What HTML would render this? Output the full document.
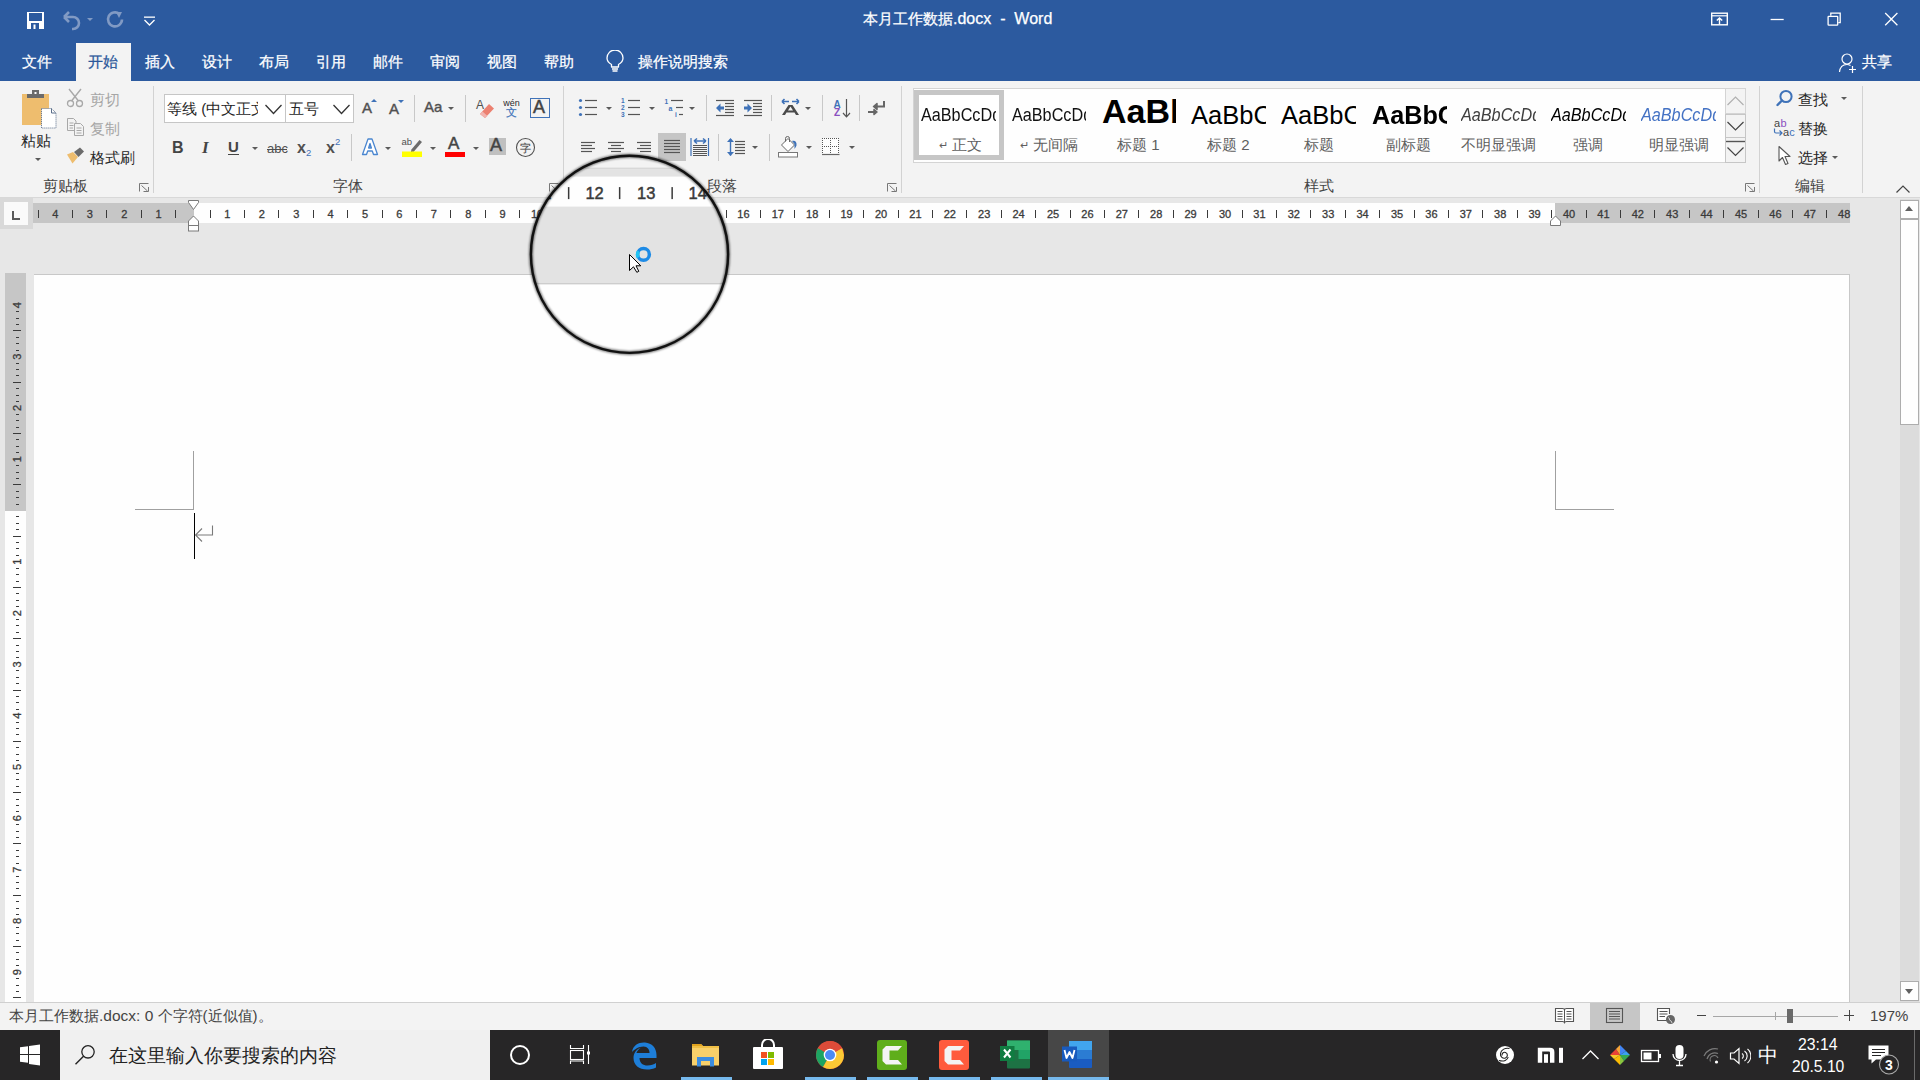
<!DOCTYPE html>
<html><head><meta charset="utf-8">
<style>
*{box-sizing:border-box;margin:0;padding:0}
html,body{width:1920px;height:1080px;overflow:hidden;background:#e7e7e7;font-family:"Liberation Sans",sans-serif}
.a{position:absolute}
#title{left:0;top:0;width:1920px;height:81px;background:#2c5a9f}
#ribbon{left:0;top:81px;width:1920px;height:117px;background:#f3f3f3;border-bottom:1px solid #d8d8d8}
#docbg{left:0;top:198px;width:1920px;height:805px;background:#e7e7e7}
#page{left:34px;top:274px;width:1816px;height:728px;background:#fefefe;border-top:1px solid #c8c8c8;border-right:1px solid #c8c8c8}
#status{left:0;top:1002px;width:1920px;height:28px;background:#f3f3f3;border-top:1px solid #d0d0d0}
#taskbar{left:0;top:1030px;width:1920px;height:50px;background:#272627}
.t{color:#fff;font-size:15px;white-space:nowrap;-webkit-text-stroke:0.25px currentColor}
</style></head><body>
<div id="title" class="a"></div>
<div id="ribbon" class="a"></div>
<!--TITLE-->
<!-- QAT -->
<svg class="a" style="left:26px;top:11px" width="19" height="19" viewBox="0 0 19 19">
<rect x="1" y="1" width="17" height="17" fill="#fff"/>
<rect x="3" y="2" width="13" height="8" fill="#2c5a9f"/>
<rect x="5" y="12" width="8" height="6" fill="#2c5a9f"/>
<rect x="7.5" y="13.5" width="2" height="4.5" fill="#fff"/>
</svg>
<svg class="a" style="left:60px;top:10px" width="36" height="22" viewBox="0 0 36 22">
<path d="M4 7 L9 2 M4 7 L9 12 M4 7 H13 A6 6 0 0 1 13 19 H12" fill="none" stroke="#819ac4" stroke-width="2.6" stroke-linejoin="round"/>
<path d="M27 8 L33 8 L30 11 Z" fill="#819ac4"/>
</svg>
<svg class="a" style="left:105px;top:10px" width="20" height="20" viewBox="0 0 20 20">
<path d="M14.5 4 A7 7 0 1 0 17 9.5" fill="none" stroke="#819ac4" stroke-width="2.6"/>
<path d="M11 2 L17 2 L14 8 Z" fill="#819ac4"/>
</svg>
<svg class="a" style="left:143px;top:15px" width="14" height="12" viewBox="0 0 14 12">
<rect x="1" y="1.5" width="11" height="1.3" fill="#fff"/>
<path d="M1.5 5 L6.5 10 L11.5 5" fill="none" stroke="#fff" stroke-width="1.3"/>
</svg>
<div class="a t" style="left:863px;top:10px;font-size:15px">本月工作数据<span style="font-size:16px">.docx&nbsp; -&nbsp; Word</span></div>
<!-- window buttons -->
<svg class="a" style="left:1700px;top:0px" width="210" height="40" viewBox="1700 0 210 40">
<rect x="1711.7" y="13.2" width="15.6" height="11.6" fill="none" stroke="#fff" stroke-width="1.4"/>
<path d="M1712 15.8 H1727" stroke="#fff" stroke-width="1.2"/>
<path d="M1719.5 24.5 V18 M1716.8 20.6 L1719.5 17.9 L1722.2 20.6" fill="none" stroke="#fff" stroke-width="1.4"/>
<path d="M1770.6 19.5 H1783.7" stroke="#fff" stroke-width="1.3"/>
<rect x="1828.1" y="16.3" width="9.6" height="8.9" rx="0.6" fill="none" stroke="#fff" stroke-width="1.3"/>
<path d="M1830.8 15.8 V13.2 H1840.2 V22.6 H1838.3" fill="none" stroke="#fff" stroke-width="1.3"/>
<path d="M1885.2 13 L1897.4 25.2 M1897.4 13 L1885.2 25.2" stroke="#fff" stroke-width="1.3"/>
</svg>
<!-- tabs -->
<div class="a" style="left:76px;top:43px;width:55px;height:38px;background:#f3f3f3"></div>
<div class="a t" style="left:22px;top:53px">文件</div>
<div class="a t" style="left:88px;top:53px;color:#2b579a">开始</div>
<div class="a t" style="left:145px;top:53px">插入</div>
<div class="a t" style="left:202px;top:53px">设计</div>
<div class="a t" style="left:259px;top:53px">布局</div>
<div class="a t" style="left:316px;top:53px">引用</div>
<div class="a t" style="left:373px;top:53px">邮件</div>
<div class="a t" style="left:430px;top:53px">审阅</div>
<div class="a t" style="left:487px;top:53px">视图</div>
<div class="a t" style="left:544px;top:53px">帮助</div>
<svg class="a" style="left:604px;top:50px" width="22" height="24" viewBox="0 0 22 24">
<path d="M7.5 17 V14.5 C4 12.5 3 10 3 8 A8 8 0 0 1 19 8 C19 10 18 12.5 14.5 14.5 V17 Z" fill="none" stroke="#fff" stroke-width="1.3" stroke-linejoin="round"/>
<path d="M8 19 H14 M8.5 21 H13.5" stroke="#fff" stroke-width="1.3"/>
</svg>
<div class="a t" style="left:638px;top:53px">操作说明搜索</div>
<svg class="a" style="left:1838px;top:52px" width="20" height="22" viewBox="0 0 20 22">
<circle cx="9" cy="7" r="5" fill="none" stroke="#fff" stroke-width="1.2"/>
<path d="M1.5 20 C2 15 5 12.5 9 12.5 C10.5 12.5 11.5 13 12.5 13.5" fill="none" stroke="#fff" stroke-width="1.2"/>
<path d="M14.5 14 V21 M11 17.5 H18" stroke="#fff" stroke-width="1.2"/>
</svg>
<div class="a t" style="left:1862px;top:53px">共享</div>
<!--/TITLE-->
<!--RIBBON-->
<style>
.r{position:absolute;font-size:15px;color:#262626;white-space:nowrap}
.lbl{position:absolute;font-size:15px;color:#444;white-space:nowrap;top:177px}
.sep{position:absolute;width:1px;background:#c8c8c8}
.gsep{position:absolute;width:1px;top:86px;height:107px;background:#d2d2d2}
.dd{position:absolute;width:0;height:0;border-left:3px solid transparent;border-right:3px solid transparent;border-top:3px solid #5a5a5a}
.launch{position:absolute;width:10px;height:9px}
</style>
<!-- clipboard group -->
<svg class="a" style="left:20px;top:88px" width="40" height="42" viewBox="0 0 40 42">
<rect x="2" y="6" width="27" height="31" fill="#eebd6e"/>
<rect x="7" y="6" width="17" height="4" fill="#6b6b6b"/>
<rect x="12" y="2" width="7" height="6" fill="#6b6b6b"/>
<rect x="14.5" y="4" width="2" height="2" fill="#fff"/>
<path d="M21.5 20.5 H31.5 L36 25 V40 H21.5 Z" fill="#fff" stroke="#5a6e8a" stroke-width="1" stroke-dasharray="1 1"/>
<path d="M31.5 20.5 V25 H36" fill="none" stroke="#5a6e8a" stroke-width="1"/>
</svg>
<div class="r" style="left:21px;top:132px">粘贴</div>
<div class="dd" style="left:35px;top:158px"></div>
<svg class="a" style="left:66px;top:88px" width="19" height="20" viewBox="0 0 19 20">
<path d="M3 1 L12.5 13 M15 1 L5.5 13" stroke="#a8a8a8" stroke-width="1.4"/>
<circle cx="4.5" cy="15.5" r="3" fill="none" stroke="#a8a8a8" stroke-width="1.3"/>
<circle cx="13.5" cy="15.5" r="3" fill="none" stroke="#a8a8a8" stroke-width="1.3"/>
</svg>
<div class="r" style="left:90px;top:91px;color:#a6a6a6">剪切</div>
<svg class="a" style="left:66px;top:117px" width="20" height="20" viewBox="0 0 20 20">
<path d="M1.5 1.5 H7.5 L10 4 V13.5 H1.5 Z" fill="#f3f3f3" stroke="#a8a8a8" stroke-width="1"/>
<path d="M3.5 6 H7.5 M3.5 8.5 H7.5 M3.5 11 H7" stroke="#a8a8a8" stroke-width="1"/>
<path d="M8.5 6.5 H14.5 L17.5 9.5 V18.5 H8.5 Z" fill="#f3f3f3" stroke="#a8a8a8" stroke-width="1"/>
<path d="M10.5 11 H15.5 M10.5 13.5 H15.5 M10.5 16 H15.5" stroke="#a8a8a8" stroke-width="1"/>
</svg>
<div class="r" style="left:90px;top:120px;color:#a6a6a6">复制</div>
<svg class="a" style="left:66px;top:147px" width="20" height="18" viewBox="0 0 20 18">
<path d="M1 7.5 L7 5 L12 10 L6.5 16.5 Z" fill="#eebd6e"/>
<path d="M8 5 L14 0.5 L18 4.5 L12.5 10 Z" fill="#6b6b6b"/>
</svg>
<div class="r" style="left:90px;top:149px">格式刷</div>
<div class="lbl" style="left:43px">剪贴板</div>
<svg class="launch" style="left:139px;top:183px" viewBox="0 0 10 9"><path d="M0.5 8.5 V0.5 H9.5 M2.5 2.5 L8.5 8 M4.5 8.5 H9.5 V4" fill="none" stroke="#777" stroke-width="1"/></svg>
<div class="gsep" style="left:153px"></div>

<!-- font group -->
<div class="a" style="left:164px;top:94px;width:190px;height:29px;background:#fff;border:1px solid #c6c6c6"></div>
<div class="a" style="left:285px;top:94px;width:1px;height:29px;background:#c6c6c6"></div>
<div class="r" style="left:167px;top:100px;width:91px;overflow:hidden">等线 (中文正文)</div>
<svg class="a" style="left:264px;top:103px" width="19" height="12" viewBox="0 0 19 12"><path d="M1.5 2 L9.5 10.5 L17.5 2" fill="none" stroke="#333" stroke-width="1.3"/></svg>
<div class="r" style="left:289px;top:100px">五号</div>
<svg class="a" style="left:332px;top:103px" width="19" height="12" viewBox="0 0 19 12"><path d="M1.5 2 L9.5 10.5 L17.5 2" fill="none" stroke="#333" stroke-width="1.3"/></svg>
<!-- grow / shrink -->
<div class="r" style="left:362px;top:99px;font-size:15px;color:#505050;-webkit-text-stroke:0.4px #505050">A</div>
<div class="a" style="left:371px;top:99px;width:0;height:0;border-left:3px solid transparent;border-right:3px solid transparent;border-bottom:3px solid #3f72b8"></div>
<div class="r" style="left:389px;top:100px;font-size:15px;color:#505050;-webkit-text-stroke:0.4px #505050">A</div>
<div class="a" style="left:398px;top:100px;width:0;height:0;border-left:3px solid transparent;border-right:3px solid transparent;border-top:3px solid #3f72b8"></div>
<div class="sep" style="left:414px;top:95px;height:27px"></div>
<div class="r" style="left:424px;top:98px;font-size:15px;color:#505050;-webkit-text-stroke:0.4px #505050">Aa</div>
<div class="dd" style="left:448px;top:107px"></div>
<div class="sep" style="left:465px;top:95px;height:27px"></div>
<!-- clear formatting -->
<svg class="a" style="left:475px;top:97px" width="22" height="23" viewBox="0 0 22 23">
<text x="1" y="12" font-family="Liberation Sans" font-size="12" fill="#505050">A</text>
<path d="M5 17 L14 7 L19 11.5 L10 21 Z" fill="#ec8070"/>
<path d="M5 17 L7.5 14.5 L12.5 19 L10 21 Z" fill="#f2b3ae"/>
</svg>
<!-- phonetic guide -->
<svg class="a" style="left:502px;top:97px" width="20" height="23" viewBox="0 0 20 23">
<text x="1.3" y="9" font-family="Liberation Sans" font-size="9" fill="#2a2a2a">wén</text>
</svg>
<div class="r" style="left:506px;top:105px;font-size:11px;color:#3f72b8;-webkit-text-stroke:0.2px #3f72b8">文</div>
<!-- char border -->
<div class="a" style="left:530px;top:98px;width:20px;height:20px;border:1.5px solid #3f72b8"></div>
<div class="r" style="left:533px;top:97px;font-size:18px;color:#444;-webkit-text-stroke:0.5px #444">A</div>
<div class="sep" style="left:554px;top:95px;height:27px;display:none"></div>
<!-- row 2 -->
<div class="r" style="left:172px;top:139px;font-size:16px;font-weight:bold;color:#444">B</div>
<div class="r" style="left:202px;top:138px;font-size:17px;font-style:italic;font-weight:bold;color:#444;font-family:'Liberation Serif',serif">I</div>
<div class="r" style="left:228px;top:138px;font-size:15px;font-weight:bold;color:#444">U</div>
<div class="a" style="left:228px;top:154px;width:11px;height:1px;background:#444"></div>
<div class="dd" style="left:252px;top:147px"></div>
<div class="r" style="left:267px;top:141px;font-size:13px;color:#505050">abc</div>
<div class="a" style="left:267px;top:149px;width:20px;height:1px;background:#505050"></div>
<div class="r" style="left:297px;top:139px;font-size:16px;font-weight:bold;color:#505050">x</div>
<div class="r" style="left:306px;top:147px;font-size:9.5px;color:#3f72b8">2</div>
<div class="r" style="left:326px;top:139px;font-size:16px;font-weight:bold;color:#505050">x</div>
<div class="r" style="left:335px;top:136px;font-size:9.5px;color:#3f72b8">2</div>
<div class="sep" style="left:351px;top:134px;height:27px"></div>
<svg class="a" style="left:361px;top:137px" width="18" height="20" viewBox="0 0 18 20">
<path d="M1.5 17.5 L7 2 H11 L16.5 17.5 H12.5 L11.3 14 H6.7 L5.5 17.5 Z M7.6 11 H10.4 L9 6.5 Z" fill="#fff" stroke="#4a86d0" stroke-width="1.3" stroke-linejoin="round"/>
<path d="M7.8 10.5 L9 7 L10.2 10.5 Z" fill="#4a86d0"/>
</svg>
<div class="dd" style="left:385px;top:147px"></div>
<svg class="a" style="left:401px;top:136px" width="24" height="22" viewBox="0 0 24 22">
<text x="0.5" y="8.5" font-family="Liberation Sans" font-size="9.5" fill="#505050">ab</text>
<path d="M10 14 L18.5 4 L21 6 L12.5 16 Z" fill="#6b6b6b"/>
<path d="M10 14 L12.5 16 L10 16.5 Z" fill="#6b6b6b"/>
<rect x="1" y="15.5" width="20" height="5.5" fill="#ffff00"/>
</svg>
<div class="dd" style="left:430px;top:147px"></div>
<div class="r" style="left:448px;top:134px;font-size:17px;color:#444;-webkit-text-stroke:0.5px #444">A</div>
<div class="a" style="left:445px;top:152px;width:20px;height:5px;background:#f00"></div>
<div class="dd" style="left:473px;top:147px"></div>
<div class="a" style="left:489px;top:138px;width:17px;height:17px;background:#c0c0c0"></div>
<div class="r" style="left:490px;top:135px;font-size:18px;color:#444;-webkit-text-stroke:0.5px #444">A</div>
<svg class="a" style="left:515px;top:137px" width="21" height="21" viewBox="0 0 21 21">
<circle cx="10.5" cy="10.5" r="9" fill="none" stroke="#505050" stroke-width="1.1"/>
</svg>
<div class="r" style="left:520px;top:141px;font-size:11px;color:#505050;-webkit-text-stroke:0.2px #505050">字</div>
<div class="lbl" style="left:333px">字体</div>
<svg class="launch" style="left:549px;top:183px" viewBox="0 0 10 9"><path d="M0.5 8.5 V0.5 H9.5 M2.5 2.5 L8.5 8 M4.5 8.5 H9.5 V4" fill="none" stroke="#777" stroke-width="1"/></svg>
<div class="gsep" style="left:563px"></div>

<!-- paragraph group -->
<svg class="a" style="left:570px;top:90px" width="330" height="75" viewBox="570 90 330 75">
<circle cx="580.5" cy="100.5" r="1.6" fill="#3f72b8"/><circle cx="580.5" cy="107.5" r="1.6" fill="#3f72b8"/><circle cx="580.5" cy="114.5" r="1.6" fill="#3f72b8"/>
<path d="M585 100.5 H597" stroke="#555" stroke-width="1.2"/><path d="M585 107.5 H597" stroke="#555" stroke-width="1.2"/><path d="M585 114.5 H597" stroke="#555" stroke-width="1.2"/>
<path d="M606 107 H612 L609 110 Z" fill="#5a5a5a"/>
<text x="621" y="103" font-family="Liberation Sans" font-size="6.5" font-weight="bold" fill="#3f72b8">1</text>
<text x="621" y="110" font-family="Liberation Sans" font-size="6.5" font-weight="bold" fill="#3f72b8">2</text>
<text x="621" y="117" font-family="Liberation Sans" font-size="6.5" font-weight="bold" fill="#3f72b8">3</text>
<path d="M628 100.5 H640" stroke="#555" stroke-width="1.2"/><path d="M628 107.5 H640" stroke="#555" stroke-width="1.2"/><path d="M628 114.5 H640" stroke="#555" stroke-width="1.2"/>
<path d="M649 107 H655 L652 110 Z" fill="#5a5a5a"/>
<text x="664.5" y="104" font-family="Liberation Sans" font-size="6.5" font-weight="bold" fill="#3f72b8">1</text>
<text x="668.5" y="110.5" font-family="Liberation Sans" font-size="7" font-weight="bold" fill="#3f72b8">a</text>
<text x="675" y="117" font-family="Liberation Sans" font-size="6.5" font-weight="bold" fill="#3f72b8">i</text>
<path d="M671 100.5 H683" stroke="#555" stroke-width="1.2"/><path d="M676 107.5 H683" stroke="#555" stroke-width="1.2"/><path d="M679 114.5 H683" stroke="#555" stroke-width="1.2"/>
<path d="M689 107 H695 L692 110 Z" fill="#5a5a5a"/>
<path d="M706.5 95 V121" stroke="#c8c8c8" stroke-width="1"/>
<path d="M716 100.5 H734" stroke="#555" stroke-width="1.2"/><path d="M716 115.5 H734" stroke="#555" stroke-width="1.2"/><path d="M725 103.5 H734" stroke="#555" stroke-width="1.2"/><path d="M725 106.5 H734" stroke="#555" stroke-width="1.2"/><path d="M725 109.5 H734" stroke="#555" stroke-width="1.2"/><path d="M725 112.5 H734" stroke="#555" stroke-width="1.2"/>
<path d="M716 108 L720.5 103.5 V106.5 H724 V109.5 H720.5 V112.5 Z" fill="#3f72b8"/>
<path d="M744 100.5 H762" stroke="#555" stroke-width="1.2"/><path d="M744 115.5 H762" stroke="#555" stroke-width="1.2"/><path d="M753 103.5 H762" stroke="#555" stroke-width="1.2"/><path d="M753 106.5 H762" stroke="#555" stroke-width="1.2"/><path d="M753 109.5 H762" stroke="#555" stroke-width="1.2"/><path d="M753 112.5 H762" stroke="#555" stroke-width="1.2"/>
<path d="M752 108 L747.5 103.5 V106.5 H744 V109.5 H747.5 V112.5 Z" fill="#3f72b8"/>
<path d="M771.5 95 V121" stroke="#c8c8c8" stroke-width="1"/>
<path d="M782 101.5 H789 M782 101.5 L784.5 99 M782 101.5 L784.5 104" fill="none" stroke="#3f72b8" stroke-width="1.6"/>
<path d="M792 101.5 H799 M799 101.5 L796.5 99 M799 101.5 L796.5 104" fill="none" stroke="#3f72b8" stroke-width="1.6"/>
<path d="M782 115 L788.5 105 H792.5 L799 115 H796 L794.5 112.5 H786.5 L785 115 Z M788 110.5 H793 L790.5 106.5 Z" fill="#4a4a4a"/>
<path d="M805 107 H811 L808 110 Z" fill="#5a5a5a"/>
<path d="M822.5 95 V121" stroke="#c8c8c8" stroke-width="1"/>
<text x="833.5" y="107.5" font-family="Liberation Sans" font-size="10" font-weight="bold" fill="#3f72b8">A</text>
<text x="834" y="116.2" font-family="Liberation Sans" font-size="10" font-weight="bold" fill="#8a4fbf">Z</text>
<path d="M846.5 99 V116.5 M843 113 L846.5 116.8 L850 113" fill="none" stroke="#555" stroke-width="1.2"/>
<path d="M859.5 95 V121" stroke="#c8c8c8" stroke-width="1"/>
<path d="M884 101 V106.5 H875" fill="none" stroke="#666" stroke-width="2"/>
<path d="M877 103.5 L873.5 106.5 L877 109.5 Z" fill="#666" stroke="#666" stroke-width="1.5" stroke-linejoin="round"/>
<path d="M868 112 H875" stroke="#666" stroke-width="2"/>
<path d="M874 109.5 L877 112 L874 114.5 Z" fill="#666" stroke="#666" stroke-width="1.5" stroke-linejoin="round"/>
<!-- row 2 -->
<path d="M581 142.5 H595" stroke="#555" stroke-width="1.2"/><path d="M581 148.5 H595" stroke="#555" stroke-width="1.2"/><path d="M581 145.5 H592" stroke="#555" stroke-width="1.2"/><path d="M581 151.5 H592" stroke="#555" stroke-width="1.2"/>
<path d="M608 142.5 H624" stroke="#555" stroke-width="1.2"/><path d="M608 148.5 H624" stroke="#555" stroke-width="1.2"/><path d="M611 145.5 H621" stroke="#555" stroke-width="1.2"/><path d="M611 151.5 H621" stroke="#555" stroke-width="1.2"/>
<path d="M637 142.5 H651" stroke="#555" stroke-width="1.2"/><path d="M637 148.5 H651" stroke="#555" stroke-width="1.2"/><path d="M640 145.5 H651" stroke="#555" stroke-width="1.2"/><path d="M640 151.5 H651" stroke="#555" stroke-width="1.2"/>
<rect x="658" y="133" width="28" height="28" fill="#c5c5c5"/>
<path d="M664 140.5 H680" stroke="#555" stroke-width="1.2"/><path d="M664 143.5 H680" stroke="#555" stroke-width="1.2"/><path d="M664 146.5 H680" stroke="#555" stroke-width="1.2"/><path d="M664 149.5 H680" stroke="#555" stroke-width="1.2"/><path d="M664 152.5 H680" stroke="#555" stroke-width="1.2"/>
<path d="M691 138 V156 M708.5 138 V156" stroke="#3f72b8" stroke-width="1.2"/>
<path d="M694 141 H706 M694 141 L697 138.5 M694 141 L697 143.5 M706 141 L703 138.5 M706 141 L703 143.5" fill="none" stroke="#3f72b8" stroke-width="1.6"/>
<path d="M693 145.5 H707" stroke="#555" stroke-width="1"/><path d="M693 147.5 H707" stroke="#555" stroke-width="1"/><path d="M693 149.5 H707" stroke="#555" stroke-width="1"/><path d="M693 151.5 H707" stroke="#555" stroke-width="1"/><path d="M693 153.5 H707" stroke="#555" stroke-width="1"/><path d="M693 155.5 H707" stroke="#555" stroke-width="1"/>
<path d="M718.5 134 V161" stroke="#c8c8c8" stroke-width="1"/>
<path d="M730.5 139 V155.5" stroke="#3f72b8" stroke-width="1.4"/>
<path d="M727 142 L730.5 138 L734 142 Z M727 152 L730.5 156 L734 152 Z" fill="#3f72b8"/>
<path d="M735 141.5 H745" stroke="#555" stroke-width="1.2"/><path d="M735 144.5 H745" stroke="#555" stroke-width="1.2"/><path d="M735 147.5 H745" stroke="#555" stroke-width="1.2"/><path d="M735 150.5 H745" stroke="#555" stroke-width="1.2"/><path d="M735 153.5 H745" stroke="#555" stroke-width="1.2"/>
<path d="M752 146 H758 L755 149 Z" fill="#5a5a5a"/>
<path d="M769.5 134 V161" stroke="#c8c8c8" stroke-width="1"/>
<path d="M781.5 145 L788 138.5 L794.5 145 L788 151.5 Z" fill="#fff" stroke="#666" stroke-width="1"/>
<path d="M785.5 141.5 V138.5 A2 2 0 0 1 789.5 138.5 V142" fill="none" stroke="#666" stroke-width="1"/>
<path d="M792 141 C795 140 797 142 796.5 145.5 C796 147 795 148 794.5 149 V144" fill="#3f72b8"/>
<rect x="778.5" y="152.5" width="19" height="4.5" fill="#fff" stroke="#777" stroke-width="1"/>
<path d="M806 146 H812 L809 149 Z" fill="#5a5a5a"/>
<rect x="822" y="138" width="17" height="17" fill="#fdfdfd"/><rect x="822" y="138" width="1" height="1" fill="#555"/><rect x="822" y="146" width="1" height="1" fill="#555"/><rect x="824" y="138" width="1" height="1" fill="#555"/><rect x="824" y="146" width="1" height="1" fill="#555"/><rect x="826" y="138" width="1" height="1" fill="#555"/><rect x="826" y="146" width="1" height="1" fill="#555"/><rect x="828" y="138" width="1" height="1" fill="#555"/><rect x="828" y="146" width="1" height="1" fill="#555"/><rect x="830" y="138" width="1" height="1" fill="#555"/><rect x="830" y="146" width="1" height="1" fill="#555"/><rect x="832" y="138" width="1" height="1" fill="#555"/><rect x="832" y="146" width="1" height="1" fill="#555"/><rect x="834" y="138" width="1" height="1" fill="#555"/><rect x="834" y="146" width="1" height="1" fill="#555"/><rect x="836" y="138" width="1" height="1" fill="#555"/><rect x="836" y="146" width="1" height="1" fill="#555"/><rect x="838" y="138" width="1" height="1" fill="#555"/><rect x="838" y="146" width="1" height="1" fill="#555"/><rect x="822" y="138" width="1" height="1" fill="#555"/><rect x="830" y="138" width="1" height="1" fill="#555"/><rect x="838" y="138" width="1" height="1" fill="#555"/><rect x="822" y="140" width="1" height="1" fill="#555"/><rect x="830" y="140" width="1" height="1" fill="#555"/><rect x="838" y="140" width="1" height="1" fill="#555"/><rect x="822" y="142" width="1" height="1" fill="#555"/><rect x="830" y="142" width="1" height="1" fill="#555"/><rect x="838" y="142" width="1" height="1" fill="#555"/><rect x="822" y="144" width="1" height="1" fill="#555"/><rect x="830" y="144" width="1" height="1" fill="#555"/><rect x="838" y="144" width="1" height="1" fill="#555"/><rect x="822" y="146" width="1" height="1" fill="#555"/><rect x="830" y="146" width="1" height="1" fill="#555"/><rect x="838" y="146" width="1" height="1" fill="#555"/><rect x="822" y="148" width="1" height="1" fill="#555"/><rect x="830" y="148" width="1" height="1" fill="#555"/><rect x="838" y="148" width="1" height="1" fill="#555"/><rect x="822" y="150" width="1" height="1" fill="#555"/><rect x="830" y="150" width="1" height="1" fill="#555"/><rect x="838" y="150" width="1" height="1" fill="#555"/><rect x="822" y="152" width="1" height="1" fill="#555"/><rect x="830" y="152" width="1" height="1" fill="#555"/><rect x="838" y="152" width="1" height="1" fill="#555"/><rect x="822" y="154" width="1" height="1" fill="#555"/><rect x="830" y="154" width="1" height="1" fill="#555"/><rect x="838" y="154" width="1" height="1" fill="#555"/>
<path d="M822 154.5 H839.5" stroke="#666" stroke-width="1.2"/>
<path d="M849 146 H855 L852 149 Z" fill="#5a5a5a"/>
</svg>
<div class="lbl" style="left:707px">段落</div>
<svg class="launch" style="left:887px;top:183px" viewBox="0 0 10 9"><path d="M0.5 8.5 V0.5 H9.5 M2.5 2.5 L8.5 8 M4.5 8.5 H9.5 V4" fill="none" stroke="#777" stroke-width="1"/></svg>
<div class="gsep" style="left:901px"></div>

<!-- styles group -->
<style>
.smp{position:absolute;overflow:hidden;white-space:nowrap;font-family:"Liberation Sans",sans-serif}
.slb{position:absolute;font-size:15px;color:#5f5f5f;white-space:nowrap;top:136px}
</style>
<div class="a" style="left:913px;top:88px;width:833px;height:75px;background:#fefefe;border:1px solid #d4d4d4"></div>
<div class="a" style="left:914px;top:90px;width:90px;height:70px;border:5px solid #c6c6c6;background:#fff"></div>
<div class="smp" style="left:921px;top:105px;width:75px;height:24px;font-size:18px;color:#111"><span style="display:inline-block;transform:scaleX(0.9);transform-origin:0 0">AaBbCcDd</span></div>
<div class="slb" style="left:939px"><span style="font-size:11px;position:relative;top:-1px">&#8629;</span> 正文</div>
<div class="smp" style="left:1012px;top:105px;width:74px;height:24px;font-size:18px;color:#111"><span style="display:inline-block;transform:scaleX(0.9);transform-origin:0 0">AaBbCcDd</span></div>
<div class="slb" style="left:1020px"><span style="font-size:11px;position:relative;top:-1px">&#8629;</span> 无间隔</div>
<div class="smp" style="left:1102px;top:92px;width:74px;height:38px;font-size:34px;font-weight:bold;color:#000"><span style="display:inline-block;transform:scaleX(1);transform-origin:0 0">AaBb</span></div>
<div class="slb" style="left:1117px">标题 1</div>
<div class="smp" style="left:1191px;top:101px;width:75px;height:28px;font-size:25.5px;color:#000"><span style="display:inline-block;transform:scaleX(1);transform-origin:0 0">AaBbCc</span></div>
<div class="slb" style="left:1207px">标题 2</div>
<div class="smp" style="left:1281px;top:101px;width:75px;height:28px;font-size:25.5px;color:#000"><span style="display:inline-block;transform:scaleX(1);transform-origin:0 0">AaBbCc</span></div>
<div class="slb" style="left:1304px">标题</div>
<div class="smp" style="left:1372px;top:100px;width:75px;height:28px;font-size:26px;font-weight:bold;color:#000"><span style="display:inline-block;transform:scaleX(0.97);transform-origin:0 0">AaBbCc</span></div>
<div class="slb" style="left:1386px">副标题</div>
<div class="smp" style="left:1461px;top:105px;width:75px;height:24px;font-size:18px;font-style:italic;color:#404040"><span style="display:inline-block;transform:scaleX(0.9);transform-origin:0 0">AaBbCcDd</span></div>
<div class="slb" style="left:1461px">不明显强调</div>
<div class="smp" style="left:1551px;top:105px;width:75px;height:24px;font-size:18px;font-style:italic;color:#000"><span style="display:inline-block;transform:scaleX(0.9);transform-origin:0 0">AaBbCcDd</span></div>
<div class="slb" style="left:1573px">强调</div>
<div class="smp" style="left:1641px;top:105px;width:75px;height:24px;font-size:18px;font-style:italic;color:#4472c4"><span style="display:inline-block;transform:scaleX(0.9);transform-origin:0 0">AaBbCcDd</span></div>
<div class="slb" style="left:1649px">明显强调</div>
<svg class="a" style="left:1724px;top:88px" width="23" height="76" viewBox="1724 88 23 76">
<rect x="1725.5" y="88.5" width="20" height="25" fill="#f3f3f3" stroke="#d4d4d4" stroke-width="1"/>
<rect x="1725.5" y="114.5" width="20" height="23" fill="#f3f3f3" stroke="#c6c6c6" stroke-width="1"/>
<rect x="1725.5" y="137.5" width="20" height="25" fill="#f3f3f3" stroke="#c6c6c6" stroke-width="1"/>
<path d="M1727.5 105 L1735.5 97 L1743.5 105" fill="none" stroke="#b0b0b0" stroke-width="1.2"/>
<path d="M1727.5 122 L1735.5 130 L1743.5 122" fill="none" stroke="#444" stroke-width="1.2"/>
<path d="M1726 141.5 H1745" stroke="#555" stroke-width="1.4"/>
<path d="M1727.5 147.5 L1735.5 155.5 L1743.5 147.5" fill="none" stroke="#444" stroke-width="1.2"/>
</svg>
<div class="lbl" style="left:1304px">样式</div>
<svg class="launch" style="left:1745px;top:183px" viewBox="0 0 10 9"><path d="M0.5 8.5 V0.5 H9.5 M2.5 2.5 L8.5 8 M4.5 8.5 H9.5 V4" fill="none" stroke="#777" stroke-width="1"/></svg>
<div class="gsep" style="left:1759px"></div>
<!-- editing group -->
<svg class="a" style="left:1772px;top:88px" width="24" height="22" viewBox="0 0 24 22">
<circle cx="14" cy="8.5" r="5.6" fill="none" stroke="#3f72b8" stroke-width="2"/>
<path d="M10 12.5 L5.5 17" stroke="#3f72b8" stroke-width="2.4" stroke-linecap="round"/>
</svg>
<div class="r" style="left:1798px;top:91px">查找</div>
<div class="dd" style="left:1841px;top:97px"></div>
<svg class="a" style="left:1772px;top:116px" width="26" height="22" viewBox="0 0 26 22">
<text x="2" y="10.5" font-family="Liberation Sans" font-size="11" fill="#444">a</text>
<text x="8.5" y="10.5" font-family="Liberation Sans" font-size="11" fill="#8a4fbf">b</text>
<text x="11" y="20" font-family="Liberation Sans" font-size="11" fill="#444">a</text>
<text x="17.3" y="20" font-family="Liberation Sans" font-size="11" fill="#3f72b8">c</text>
<path d="M2.5 12.5 V15.5 A1.5 1.5 0 0 0 4 17 H10 M7.5 14.5 L10 17 L7.5 19.5" fill="none" stroke="#3f72b8" stroke-width="1.2"/>
</svg>
<div class="r" style="left:1798px;top:120px">替换</div>
<svg class="a" style="left:1777px;top:145px" width="15" height="21" viewBox="0 0 15 21">
<path d="M2 1.5 V16 L5.5 12.5 L8.5 19.5 L11 18.5 L8 11.5 H13 Z" fill="#fff" stroke="#555" stroke-width="1.1" stroke-linejoin="round"/>
</svg>
<div class="r" style="left:1798px;top:149px">选择</div>
<div class="dd" style="left:1832px;top:156px"></div>
<div class="lbl" style="left:1795px">编辑</div>
<div class="gsep" style="left:1862px"></div>
<svg class="a" style="left:1895px;top:184px" width="16" height="10" viewBox="0 0 16 10"><path d="M1.5 8.5 L8 2 L14.5 8.5" fill="none" stroke="#444" stroke-width="1.2"/></svg>
<!--/RIBBON1-->
<div id="docbg" class="a"></div>
<div id="page" class="a"></div>
<div id="status" class="a"></div>
<div id="taskbar" class="a"></div>
<!--RULER-->
<div class="a" style="left:0;top:198px;width:33px;height:31px;background:#d9d9d9"></div>
<div class="a" style="left:4px;top:202px;width:24px;height:23px;background:#fafafa"></div>
<svg class="a" style="left:11px;top:211px" width="10" height="10" viewBox="0 0 10 10"><path d="M1 0 V9 H9 V7 H3 V0 Z" fill="#5a5a5a"/></svg>
<div class="a" style="left:33px;top:203px;width:1817px;height:20px;background:#c6c6c6"></div>
<div class="a" style="left:194px;top:203px;width:1361px;height:20px;background:#fefefe"></div>
<svg class="a" style="left:0;top:198px" width="1920" height="40" viewBox="0 198 1920 40"><text x="55.4" y="218" text-anchor="middle" font-family="Liberation Sans" font-size="11" fill="#3a3a3a" stroke="#3a3a3a" stroke-width="0.3">4</text><text x="89.8" y="218" text-anchor="middle" font-family="Liberation Sans" font-size="11" fill="#3a3a3a" stroke="#3a3a3a" stroke-width="0.3">3</text><text x="124.2" y="218" text-anchor="middle" font-family="Liberation Sans" font-size="11" fill="#3a3a3a" stroke="#3a3a3a" stroke-width="0.3">2</text><text x="158.6" y="218" text-anchor="middle" font-family="Liberation Sans" font-size="11" fill="#3a3a3a" stroke="#3a3a3a" stroke-width="0.3">1</text><text x="227.4" y="218" text-anchor="middle" font-family="Liberation Sans" font-size="11" fill="#3a3a3a" stroke="#3a3a3a" stroke-width="0.3">1</text><text x="261.8" y="218" text-anchor="middle" font-family="Liberation Sans" font-size="11" fill="#3a3a3a" stroke="#3a3a3a" stroke-width="0.3">2</text><text x="296.2" y="218" text-anchor="middle" font-family="Liberation Sans" font-size="11" fill="#3a3a3a" stroke="#3a3a3a" stroke-width="0.3">3</text><text x="330.6" y="218" text-anchor="middle" font-family="Liberation Sans" font-size="11" fill="#3a3a3a" stroke="#3a3a3a" stroke-width="0.3">4</text><text x="365.0" y="218" text-anchor="middle" font-family="Liberation Sans" font-size="11" fill="#3a3a3a" stroke="#3a3a3a" stroke-width="0.3">5</text><text x="399.4" y="218" text-anchor="middle" font-family="Liberation Sans" font-size="11" fill="#3a3a3a" stroke="#3a3a3a" stroke-width="0.3">6</text><text x="433.8" y="218" text-anchor="middle" font-family="Liberation Sans" font-size="11" fill="#3a3a3a" stroke="#3a3a3a" stroke-width="0.3">7</text><text x="468.2" y="218" text-anchor="middle" font-family="Liberation Sans" font-size="11" fill="#3a3a3a" stroke="#3a3a3a" stroke-width="0.3">8</text><text x="502.6" y="218" text-anchor="middle" font-family="Liberation Sans" font-size="11" fill="#3a3a3a" stroke="#3a3a3a" stroke-width="0.3">9</text><text x="537.0" y="218" text-anchor="middle" font-family="Liberation Sans" font-size="11" fill="#3a3a3a" stroke="#3a3a3a" stroke-width="0.3">10</text><text x="571.4" y="218" text-anchor="middle" font-family="Liberation Sans" font-size="11" fill="#3a3a3a" stroke="#3a3a3a" stroke-width="0.3">11</text><text x="605.8" y="218" text-anchor="middle" font-family="Liberation Sans" font-size="11" fill="#3a3a3a" stroke="#3a3a3a" stroke-width="0.3">12</text><text x="640.2" y="218" text-anchor="middle" font-family="Liberation Sans" font-size="11" fill="#3a3a3a" stroke="#3a3a3a" stroke-width="0.3">13</text><text x="674.6" y="218" text-anchor="middle" font-family="Liberation Sans" font-size="11" fill="#3a3a3a" stroke="#3a3a3a" stroke-width="0.3">14</text><text x="709.0" y="218" text-anchor="middle" font-family="Liberation Sans" font-size="11" fill="#3a3a3a" stroke="#3a3a3a" stroke-width="0.3">15</text><text x="743.4" y="218" text-anchor="middle" font-family="Liberation Sans" font-size="11" fill="#3a3a3a" stroke="#3a3a3a" stroke-width="0.3">16</text><text x="777.8" y="218" text-anchor="middle" font-family="Liberation Sans" font-size="11" fill="#3a3a3a" stroke="#3a3a3a" stroke-width="0.3">17</text><text x="812.2" y="218" text-anchor="middle" font-family="Liberation Sans" font-size="11" fill="#3a3a3a" stroke="#3a3a3a" stroke-width="0.3">18</text><text x="846.6" y="218" text-anchor="middle" font-family="Liberation Sans" font-size="11" fill="#3a3a3a" stroke="#3a3a3a" stroke-width="0.3">19</text><text x="881.0" y="218" text-anchor="middle" font-family="Liberation Sans" font-size="11" fill="#3a3a3a" stroke="#3a3a3a" stroke-width="0.3">20</text><text x="915.4" y="218" text-anchor="middle" font-family="Liberation Sans" font-size="11" fill="#3a3a3a" stroke="#3a3a3a" stroke-width="0.3">21</text><text x="949.8" y="218" text-anchor="middle" font-family="Liberation Sans" font-size="11" fill="#3a3a3a" stroke="#3a3a3a" stroke-width="0.3">22</text><text x="984.2" y="218" text-anchor="middle" font-family="Liberation Sans" font-size="11" fill="#3a3a3a" stroke="#3a3a3a" stroke-width="0.3">23</text><text x="1018.6" y="218" text-anchor="middle" font-family="Liberation Sans" font-size="11" fill="#3a3a3a" stroke="#3a3a3a" stroke-width="0.3">24</text><text x="1053.0" y="218" text-anchor="middle" font-family="Liberation Sans" font-size="11" fill="#3a3a3a" stroke="#3a3a3a" stroke-width="0.3">25</text><text x="1087.4" y="218" text-anchor="middle" font-family="Liberation Sans" font-size="11" fill="#3a3a3a" stroke="#3a3a3a" stroke-width="0.3">26</text><text x="1121.8" y="218" text-anchor="middle" font-family="Liberation Sans" font-size="11" fill="#3a3a3a" stroke="#3a3a3a" stroke-width="0.3">27</text><text x="1156.2" y="218" text-anchor="middle" font-family="Liberation Sans" font-size="11" fill="#3a3a3a" stroke="#3a3a3a" stroke-width="0.3">28</text><text x="1190.6" y="218" text-anchor="middle" font-family="Liberation Sans" font-size="11" fill="#3a3a3a" stroke="#3a3a3a" stroke-width="0.3">29</text><text x="1225.0" y="218" text-anchor="middle" font-family="Liberation Sans" font-size="11" fill="#3a3a3a" stroke="#3a3a3a" stroke-width="0.3">30</text><text x="1259.4" y="218" text-anchor="middle" font-family="Liberation Sans" font-size="11" fill="#3a3a3a" stroke="#3a3a3a" stroke-width="0.3">31</text><text x="1293.8" y="218" text-anchor="middle" font-family="Liberation Sans" font-size="11" fill="#3a3a3a" stroke="#3a3a3a" stroke-width="0.3">32</text><text x="1328.2" y="218" text-anchor="middle" font-family="Liberation Sans" font-size="11" fill="#3a3a3a" stroke="#3a3a3a" stroke-width="0.3">33</text><text x="1362.6" y="218" text-anchor="middle" font-family="Liberation Sans" font-size="11" fill="#3a3a3a" stroke="#3a3a3a" stroke-width="0.3">34</text><text x="1397.0" y="218" text-anchor="middle" font-family="Liberation Sans" font-size="11" fill="#3a3a3a" stroke="#3a3a3a" stroke-width="0.3">35</text><text x="1431.4" y="218" text-anchor="middle" font-family="Liberation Sans" font-size="11" fill="#3a3a3a" stroke="#3a3a3a" stroke-width="0.3">36</text><text x="1465.8" y="218" text-anchor="middle" font-family="Liberation Sans" font-size="11" fill="#3a3a3a" stroke="#3a3a3a" stroke-width="0.3">37</text><text x="1500.2" y="218" text-anchor="middle" font-family="Liberation Sans" font-size="11" fill="#3a3a3a" stroke="#3a3a3a" stroke-width="0.3">38</text><text x="1534.6" y="218" text-anchor="middle" font-family="Liberation Sans" font-size="11" fill="#3a3a3a" stroke="#3a3a3a" stroke-width="0.3">39</text><text x="1569.0" y="218" text-anchor="middle" font-family="Liberation Sans" font-size="11" fill="#3a3a3a" stroke="#3a3a3a" stroke-width="0.3">40</text><text x="1603.4" y="218" text-anchor="middle" font-family="Liberation Sans" font-size="11" fill="#3a3a3a" stroke="#3a3a3a" stroke-width="0.3">41</text><text x="1637.8" y="218" text-anchor="middle" font-family="Liberation Sans" font-size="11" fill="#3a3a3a" stroke="#3a3a3a" stroke-width="0.3">42</text><text x="1672.2" y="218" text-anchor="middle" font-family="Liberation Sans" font-size="11" fill="#3a3a3a" stroke="#3a3a3a" stroke-width="0.3">43</text><text x="1706.6" y="218" text-anchor="middle" font-family="Liberation Sans" font-size="11" fill="#3a3a3a" stroke="#3a3a3a" stroke-width="0.3">44</text><text x="1741.0" y="218" text-anchor="middle" font-family="Liberation Sans" font-size="11" fill="#3a3a3a" stroke="#3a3a3a" stroke-width="0.3">45</text><text x="1775.4" y="218" text-anchor="middle" font-family="Liberation Sans" font-size="11" fill="#3a3a3a" stroke="#3a3a3a" stroke-width="0.3">46</text><text x="1809.8" y="218" text-anchor="middle" font-family="Liberation Sans" font-size="11" fill="#3a3a3a" stroke="#3a3a3a" stroke-width="0.3">47</text><text x="1844.2" y="218" text-anchor="middle" font-family="Liberation Sans" font-size="11" fill="#3a3a3a" stroke="#3a3a3a" stroke-width="0.3">48</text><rect x="38" y="210" width="1" height="8" fill="#3a3a3a"/><rect x="72" y="210" width="1" height="8" fill="#3a3a3a"/><rect x="106" y="210" width="1" height="8" fill="#3a3a3a"/><rect x="141" y="210" width="1" height="8" fill="#3a3a3a"/><rect x="175" y="210" width="1" height="8" fill="#3a3a3a"/><rect x="210" y="210" width="1" height="8" fill="#3a3a3a"/><rect x="244" y="210" width="1" height="8" fill="#3a3a3a"/><rect x="278" y="210" width="1" height="8" fill="#3a3a3a"/><rect x="313" y="210" width="1" height="8" fill="#3a3a3a"/><rect x="347" y="210" width="1" height="8" fill="#3a3a3a"/><rect x="382" y="210" width="1" height="8" fill="#3a3a3a"/><rect x="416" y="210" width="1" height="8" fill="#3a3a3a"/><rect x="450" y="210" width="1" height="8" fill="#3a3a3a"/><rect x="485" y="210" width="1" height="8" fill="#3a3a3a"/><rect x="519" y="210" width="1" height="8" fill="#3a3a3a"/><rect x="554" y="210" width="1" height="8" fill="#3a3a3a"/><rect x="588" y="210" width="1" height="8" fill="#3a3a3a"/><rect x="622" y="210" width="1" height="8" fill="#3a3a3a"/><rect x="657" y="210" width="1" height="8" fill="#3a3a3a"/><rect x="691" y="210" width="1" height="8" fill="#3a3a3a"/><rect x="726" y="210" width="1" height="8" fill="#3a3a3a"/><rect x="760" y="210" width="1" height="8" fill="#3a3a3a"/><rect x="794" y="210" width="1" height="8" fill="#3a3a3a"/><rect x="829" y="210" width="1" height="8" fill="#3a3a3a"/><rect x="863" y="210" width="1" height="8" fill="#3a3a3a"/><rect x="898" y="210" width="1" height="8" fill="#3a3a3a"/><rect x="932" y="210" width="1" height="8" fill="#3a3a3a"/><rect x="966" y="210" width="1" height="8" fill="#3a3a3a"/><rect x="1001" y="210" width="1" height="8" fill="#3a3a3a"/><rect x="1035" y="210" width="1" height="8" fill="#3a3a3a"/><rect x="1070" y="210" width="1" height="8" fill="#3a3a3a"/><rect x="1104" y="210" width="1" height="8" fill="#3a3a3a"/><rect x="1138" y="210" width="1" height="8" fill="#3a3a3a"/><rect x="1173" y="210" width="1" height="8" fill="#3a3a3a"/><rect x="1207" y="210" width="1" height="8" fill="#3a3a3a"/><rect x="1242" y="210" width="1" height="8" fill="#3a3a3a"/><rect x="1276" y="210" width="1" height="8" fill="#3a3a3a"/><rect x="1310" y="210" width="1" height="8" fill="#3a3a3a"/><rect x="1345" y="210" width="1" height="8" fill="#3a3a3a"/><rect x="1379" y="210" width="1" height="8" fill="#3a3a3a"/><rect x="1414" y="210" width="1" height="8" fill="#3a3a3a"/><rect x="1448" y="210" width="1" height="8" fill="#3a3a3a"/><rect x="1482" y="210" width="1" height="8" fill="#3a3a3a"/><rect x="1517" y="210" width="1" height="8" fill="#3a3a3a"/><rect x="1551" y="210" width="1" height="8" fill="#3a3a3a"/><rect x="1586" y="210" width="1" height="8" fill="#3a3a3a"/><rect x="1620" y="210" width="1" height="8" fill="#3a3a3a"/><rect x="1654" y="210" width="1" height="8" fill="#3a3a3a"/><rect x="1689" y="210" width="1" height="8" fill="#3a3a3a"/><rect x="1723" y="210" width="1" height="8" fill="#3a3a3a"/><rect x="1758" y="210" width="1" height="8" fill="#3a3a3a"/><rect x="1792" y="210" width="1" height="8" fill="#3a3a3a"/><rect x="1826" y="210" width="1" height="8" fill="#3a3a3a"/><path d="M188.5 200.5 H198.5 V202.5 L193.5 209.5 L188.5 202.5 Z" fill="#fff" stroke="#7a7a7a" stroke-width="1"/><path d="M193.5 216 L198.5 221 V225.5 H188.5 V221 Z" fill="#fff" stroke="#7a7a7a" stroke-width="1"/><rect x="188.5" y="225.5" width="10" height="5.5" fill="#fff" stroke="#7a7a7a" stroke-width="1"/><path d="M1555.5 216 L1560.5 221 V225.5 H1550.5 V221 Z" fill="#fff" stroke="#7a7a7a" stroke-width="1"/></svg>
<div class="a" style="left:5px;top:273px;width:21px;height:238px;background:#c6c6c6"></div>
<div class="a" style="left:5px;top:511px;width:21px;height:491px;background:#fefefe"></div>
<svg class="a" style="left:0;top:273px" width="30" height="730" viewBox="0 273 30 730"><text x="0" y="0" transform="translate(20.5 305.3) rotate(-90)" text-anchor="middle" font-family="Liberation Sans" font-size="11" fill="#3a3a3a" stroke="#3a3a3a" stroke-width="0.3">4</text><rect x="16" y="311" width="3" height="1" fill="#3a3a3a"/><rect x="16" y="318" width="3" height="1" fill="#3a3a3a"/><rect x="16" y="324" width="3" height="1" fill="#3a3a3a"/><rect x="13" y="330" width="8" height="1" fill="#3a3a3a"/><rect x="16" y="337" width="3" height="1" fill="#3a3a3a"/><rect x="16" y="343" width="3" height="1" fill="#3a3a3a"/><rect x="16" y="350" width="3" height="1" fill="#3a3a3a"/><text x="0" y="0" transform="translate(20.5 356.6) rotate(-90)" text-anchor="middle" font-family="Liberation Sans" font-size="11" fill="#3a3a3a" stroke="#3a3a3a" stroke-width="0.3">3</text><rect x="16" y="363" width="3" height="1" fill="#3a3a3a"/><rect x="16" y="369" width="3" height="1" fill="#3a3a3a"/><rect x="16" y="375" width="3" height="1" fill="#3a3a3a"/><rect x="13" y="382" width="8" height="1" fill="#3a3a3a"/><rect x="16" y="388" width="3" height="1" fill="#3a3a3a"/><rect x="16" y="395" width="3" height="1" fill="#3a3a3a"/><rect x="16" y="401" width="3" height="1" fill="#3a3a3a"/><text x="0" y="0" transform="translate(20.5 407.9) rotate(-90)" text-anchor="middle" font-family="Liberation Sans" font-size="11" fill="#3a3a3a" stroke="#3a3a3a" stroke-width="0.3">2</text><rect x="16" y="414" width="3" height="1" fill="#3a3a3a"/><rect x="16" y="420" width="3" height="1" fill="#3a3a3a"/><rect x="16" y="427" width="3" height="1" fill="#3a3a3a"/><rect x="13" y="433" width="8" height="1" fill="#3a3a3a"/><rect x="16" y="439" width="3" height="1" fill="#3a3a3a"/><rect x="16" y="446" width="3" height="1" fill="#3a3a3a"/><rect x="16" y="452" width="3" height="1" fill="#3a3a3a"/><text x="0" y="0" transform="translate(20.5 459.2) rotate(-90)" text-anchor="middle" font-family="Liberation Sans" font-size="11" fill="#3a3a3a" stroke="#3a3a3a" stroke-width="0.3">1</text><rect x="16" y="465" width="3" height="1" fill="#3a3a3a"/><rect x="16" y="472" width="3" height="1" fill="#3a3a3a"/><rect x="16" y="478" width="3" height="1" fill="#3a3a3a"/><rect x="13" y="484" width="8" height="1" fill="#3a3a3a"/><rect x="16" y="491" width="3" height="1" fill="#3a3a3a"/><rect x="16" y="497" width="3" height="1" fill="#3a3a3a"/><rect x="16" y="504" width="3" height="1" fill="#3a3a3a"/><rect x="16" y="516" width="3" height="1" fill="#3a3a3a"/><rect x="16" y="523" width="3" height="1" fill="#3a3a3a"/><rect x="16" y="529" width="3" height="1" fill="#3a3a3a"/><rect x="13" y="536" width="8" height="1" fill="#3a3a3a"/><rect x="16" y="542" width="3" height="1" fill="#3a3a3a"/><rect x="16" y="548" width="3" height="1" fill="#3a3a3a"/><rect x="16" y="555" width="3" height="1" fill="#3a3a3a"/><text x="0" y="0" transform="translate(20.5 561.8) rotate(-90)" text-anchor="middle" font-family="Liberation Sans" font-size="11" fill="#3a3a3a" stroke="#3a3a3a" stroke-width="0.3">1</text><rect x="16" y="568" width="3" height="1" fill="#3a3a3a"/><rect x="16" y="574" width="3" height="1" fill="#3a3a3a"/><rect x="16" y="581" width="3" height="1" fill="#3a3a3a"/><rect x="13" y="587" width="8" height="1" fill="#3a3a3a"/><rect x="16" y="593" width="3" height="1" fill="#3a3a3a"/><rect x="16" y="600" width="3" height="1" fill="#3a3a3a"/><rect x="16" y="606" width="3" height="1" fill="#3a3a3a"/><text x="0" y="0" transform="translate(20.5 613.1) rotate(-90)" text-anchor="middle" font-family="Liberation Sans" font-size="11" fill="#3a3a3a" stroke="#3a3a3a" stroke-width="0.3">2</text><rect x="16" y="619" width="3" height="1" fill="#3a3a3a"/><rect x="16" y="625" width="3" height="1" fill="#3a3a3a"/><rect x="16" y="632" width="3" height="1" fill="#3a3a3a"/><rect x="13" y="638" width="8" height="1" fill="#3a3a3a"/><rect x="16" y="645" width="3" height="1" fill="#3a3a3a"/><rect x="16" y="651" width="3" height="1" fill="#3a3a3a"/><rect x="16" y="657" width="3" height="1" fill="#3a3a3a"/><text x="0" y="0" transform="translate(20.5 664.4) rotate(-90)" text-anchor="middle" font-family="Liberation Sans" font-size="11" fill="#3a3a3a" stroke="#3a3a3a" stroke-width="0.3">3</text><rect x="16" y="670" width="3" height="1" fill="#3a3a3a"/><rect x="16" y="677" width="3" height="1" fill="#3a3a3a"/><rect x="16" y="683" width="3" height="1" fill="#3a3a3a"/><rect x="13" y="690" width="8" height="1" fill="#3a3a3a"/><rect x="16" y="696" width="3" height="1" fill="#3a3a3a"/><rect x="16" y="702" width="3" height="1" fill="#3a3a3a"/><rect x="16" y="709" width="3" height="1" fill="#3a3a3a"/><text x="0" y="0" transform="translate(20.5 715.7) rotate(-90)" text-anchor="middle" font-family="Liberation Sans" font-size="11" fill="#3a3a3a" stroke="#3a3a3a" stroke-width="0.3">4</text><rect x="16" y="722" width="3" height="1" fill="#3a3a3a"/><rect x="16" y="728" width="3" height="1" fill="#3a3a3a"/><rect x="16" y="734" width="3" height="1" fill="#3a3a3a"/><rect x="13" y="741" width="8" height="1" fill="#3a3a3a"/><rect x="16" y="747" width="3" height="1" fill="#3a3a3a"/><rect x="16" y="754" width="3" height="1" fill="#3a3a3a"/><rect x="16" y="760" width="3" height="1" fill="#3a3a3a"/><text x="0" y="0" transform="translate(20.5 767.0) rotate(-90)" text-anchor="middle" font-family="Liberation Sans" font-size="11" fill="#3a3a3a" stroke="#3a3a3a" stroke-width="0.3">5</text><rect x="16" y="773" width="3" height="1" fill="#3a3a3a"/><rect x="16" y="779" width="3" height="1" fill="#3a3a3a"/><rect x="16" y="786" width="3" height="1" fill="#3a3a3a"/><rect x="13" y="792" width="8" height="1" fill="#3a3a3a"/><rect x="16" y="799" width="3" height="1" fill="#3a3a3a"/><rect x="16" y="805" width="3" height="1" fill="#3a3a3a"/><rect x="16" y="811" width="3" height="1" fill="#3a3a3a"/><text x="0" y="0" transform="translate(20.5 818.3) rotate(-90)" text-anchor="middle" font-family="Liberation Sans" font-size="11" fill="#3a3a3a" stroke="#3a3a3a" stroke-width="0.3">6</text><rect x="16" y="824" width="3" height="1" fill="#3a3a3a"/><rect x="16" y="831" width="3" height="1" fill="#3a3a3a"/><rect x="16" y="837" width="3" height="1" fill="#3a3a3a"/><rect x="13" y="843" width="8" height="1" fill="#3a3a3a"/><rect x="16" y="850" width="3" height="1" fill="#3a3a3a"/><rect x="16" y="856" width="3" height="1" fill="#3a3a3a"/><rect x="16" y="863" width="3" height="1" fill="#3a3a3a"/><text x="0" y="0" transform="translate(20.5 869.6) rotate(-90)" text-anchor="middle" font-family="Liberation Sans" font-size="11" fill="#3a3a3a" stroke="#3a3a3a" stroke-width="0.3">7</text><rect x="16" y="876" width="3" height="1" fill="#3a3a3a"/><rect x="16" y="882" width="3" height="1" fill="#3a3a3a"/><rect x="16" y="888" width="3" height="1" fill="#3a3a3a"/><rect x="13" y="895" width="8" height="1" fill="#3a3a3a"/><rect x="16" y="901" width="3" height="1" fill="#3a3a3a"/><rect x="16" y="908" width="3" height="1" fill="#3a3a3a"/><rect x="16" y="914" width="3" height="1" fill="#3a3a3a"/><text x="0" y="0" transform="translate(20.5 920.9) rotate(-90)" text-anchor="middle" font-family="Liberation Sans" font-size="11" fill="#3a3a3a" stroke="#3a3a3a" stroke-width="0.3">8</text><rect x="16" y="927" width="3" height="1" fill="#3a3a3a"/><rect x="16" y="933" width="3" height="1" fill="#3a3a3a"/><rect x="16" y="940" width="3" height="1" fill="#3a3a3a"/><rect x="13" y="946" width="8" height="1" fill="#3a3a3a"/><rect x="16" y="952" width="3" height="1" fill="#3a3a3a"/><rect x="16" y="959" width="3" height="1" fill="#3a3a3a"/><rect x="16" y="965" width="3" height="1" fill="#3a3a3a"/><text x="0" y="0" transform="translate(20.5 972.2) rotate(-90)" text-anchor="middle" font-family="Liberation Sans" font-size="11" fill="#3a3a3a" stroke="#3a3a3a" stroke-width="0.3">9</text><rect x="16" y="978" width="3" height="1" fill="#3a3a3a"/><rect x="16" y="985" width="3" height="1" fill="#3a3a3a"/><rect x="16" y="991" width="3" height="1" fill="#3a3a3a"/><rect x="13" y="997" width="8" height="1" fill="#3a3a3a"/></svg>
<div class="a" style="left:193px;top:451px;width:1px;height:59px;background:#a0a0a0"></div>
<div class="a" style="left:135px;top:509px;width:59px;height:1px;background:#a0a0a0"></div>
<div class="a" style="left:1555px;top:451px;width:1px;height:59px;background:#a0a0a0"></div>
<div class="a" style="left:1555px;top:509px;width:59px;height:1px;background:#a0a0a0"></div>
<div class="a" style="left:194px;top:513px;width:1px;height:46px;background:#000"></div>
<svg class="a" style="left:193px;top:523px" width="22" height="22" viewBox="193 523 22 22"><path d="M212.5 525.5 V535 H195.5 M202 528.5 L195.5 535 L202 541.5" fill="none" stroke="#7a7a7a" stroke-width="1.1"/></svg>
<div class="a" style="left:1900px;top:199px;width:19px;height:803px;background:#dcdcdc"></div>
<div class="a" style="left:1900px;top:200px;width:19px;height:20px;background:#fefefe;border:1px solid #adadad;border-bottom-width:2px"></div>
<div class="a" style="left:1905px;top:206px;width:0;height:0;border-left:4.5px solid transparent;border-right:4.5px solid transparent;border-bottom:5px solid #606060"></div>
<div class="a" style="left:1900px;top:219px;width:19px;height:206px;background:#fefefe;border:1px solid #adadad"></div>
<div class="a" style="left:1900px;top:981px;width:19px;height:20px;background:#fefefe;border:1px solid #adadad"></div>
<div class="a" style="left:1905px;top:989px;width:0;height:0;border-left:4.5px solid transparent;border-right:4.5px solid transparent;border-top:5px solid #606060"></div>
<!--/RULER-->
<!--STATUS-->
<div class="a" style="left:9px;top:1007px;font-size:15px;color:#444;white-space:nowrap">本月工作数据<span style="font-size:15.5px">.docx: 0 </span>个字符(近似值)。</div>
<svg class="a" style="left:1554px;top:1006px" width="21" height="19" viewBox="0 0 21 19">
<path d="M1.5 2.5 H8.5 Q10.5 2.5 10.5 4 Q10.5 2.5 12.5 2.5 H19.5 V15.5 H12.5 Q10.5 15.5 10.5 17 Q10.5 15.5 8.5 15.5 H1.5 Z" fill="#fff" stroke="#555" stroke-width="1.1"/>
<path d="M10.5 4 V17.5 M3.5 5.5 H8.5 M3.5 8 H8.5 M3.5 10.5 H8.5 M3.5 13 H8.5 M12.5 5.5 H17.5 M12.5 8 H17.5 M12.5 10.5 H17.5 M12.5 13 H17.5" stroke="#555" stroke-width="1"/>
</svg>
<div class="a" style="left:1590px;top:1003px;width:50px;height:27px;background:#c6c6c6"></div>
<svg class="a" style="left:1605px;top:1007px" width="19" height="17" viewBox="0 0 19 17">
<rect x="1.5" y="1.5" width="16" height="14" fill="none" stroke="#555" stroke-width="1.1"/>
<path d="M4 4.5 H15 M4 7 H15 M4 9.5 H15 M4 12 H15" stroke="#555" stroke-width="1"/>
</svg>
<svg class="a" style="left:1656px;top:1007px" width="20" height="18" viewBox="0 0 20 18">
<path d="M11 13.5 H1.5 V1.5 H13.5 V7" fill="#fff" stroke="#555" stroke-width="1.1"/>
<path d="M3.5 4.5 H11.5 M3.5 7 H11.5 M3.5 9.5 H9" stroke="#555" stroke-width="1"/>
<circle cx="14.5" cy="12.5" r="4.5" fill="#666"/>
<path d="M12 10.5 Q14 11 13.5 13 Q15.5 13.5 16 16" fill="none" stroke="#ddd" stroke-width="0.9"/>
</svg>
<div class="a" style="left:1697px;top:1015px;width:9px;height:1px;background:#444"></div>
<div class="a" style="left:1713px;top:1016px;width:125px;height:1px;background:#a6a6a6"></div>
<div class="a" style="left:1775px;top:1012px;width:1px;height:8px;background:#a6a6a6"></div>
<div class="a" style="left:1787px;top:1009px;width:6px;height:14px;background:#6a6a6a"></div>
<div class="a" style="left:1844px;top:1015px;width:10px;height:1px;background:#444"></div>
<div class="a" style="left:1849px;top:1010px;width:1px;height:11px;background:#444"></div>
<div class="a" style="left:1870px;top:1007px;font-size:15px;color:#444;white-space:nowrap">197%</div>
<!--TASKBAR-->
<svg class="a" style="left:19px;top:1044px" width="22" height="22" viewBox="0 0 22 22">
<path d="M1 3.3 L9 2.2 V10 H1 Z M10 2.05 L21 0.6 V10 H10 Z M1 11 H9 V18.8 L1 17.7 Z M10 11 H21 V21.4 L10 19.95 Z" fill="#fff"/>
</svg>
<div class="a" style="left:60px;top:1030px;width:430px;height:50px;background:#f0f0f0"></div>
<svg class="a" style="left:72px;top:1043px" width="26" height="24" viewBox="0 0 26 24">
<circle cx="16" cy="8.8" r="6.2" fill="none" stroke="#222" stroke-width="1.3"/>
<path d="M11.5 13.3 L3.5 21.3" stroke="#222" stroke-width="1.4"/>
</svg>
<div class="a" style="left:109px;top:1042px;font-size:19.4px;color:#222;white-space:nowrap">在这里输入你要搜索的内容</div>
<svg class="a" style="left:508px;top:1043px" width="24" height="24" viewBox="0 0 24 24"><circle cx="12" cy="12" r="9" fill="none" stroke="#fff" stroke-width="2"/></svg>
<svg class="a" style="left:566px;top:1042px" width="28" height="26" viewBox="566 1042 28 26">
<path d="M570.5 1045 V1048.5 H583.5 V1045 M570.5 1064 V1061 H583.5 V1064" fill="none" stroke="#fff" stroke-width="1.1"/>
<rect x="570.5" y="1050.5" width="13" height="9" fill="none" stroke="#fff" stroke-width="1.1"/>
<path d="M588.5 1045 V1064" stroke="#fff" stroke-width="1.1"/>
<rect x="587" y="1051.5" width="3" height="3" fill="#fff"/>
</svg>
<svg class="a" style="left:630px;top:1041px" width="28" height="29" viewBox="0 0 28 29">
<path d="M2 11 C3 4 9 1 15 1.5 C22 2 26.5 7 26.5 14 V17 H9.5 C9.5 22 13 24.5 17.5 24.5 C21 24.5 24 23.5 26 22 V26.5 C23.5 28 20 28.5 17 28.5 C9 28.5 3.5 24 3.5 17 C3.5 11.5 7 8 11 6.5 C8 8.5 6.5 11 6.5 12 H19.5 C19.5 8.5 17.5 5.5 13.5 5.5 C8.5 5.5 4.5 8.5 2 11 Z" fill="#1e7ed8"/>
</svg>
<svg class="a" style="left:691px;top:1042px" width="30" height="26" viewBox="0 0 30 26">
<path d="M1 2 H10 L12 4 H28 V23.5 H1 Z" fill="#f8d06a"/>
<path d="M1 2 H10 L12 4 H1 Z" fill="#e0a21e"/>
<rect x="1" y="4" width="27" height="2" fill="#f0bf45"/>
<path d="M6 24.5 V15 H23 V24.5 H19 V19 H10 V24.5 Z" fill="#3c8de0"/>
</svg>
<svg class="a" style="left:752px;top:1039px" width="32" height="32" viewBox="0 0 32 32">
<path d="M10 9 V6 A6 6 0 0 1 22 6 V9" fill="none" stroke="#fff" stroke-width="2"/>
<rect x="1" y="8" width="30" height="22" rx="1" fill="#fff"/>
<rect x="9" y="13" width="6" height="6" fill="#f25022"/><rect x="16" y="13" width="6" height="6" fill="#7fba00"/>
<rect x="9" y="20" width="6" height="6" fill="#00a4ef"/><rect x="16" y="20" width="6" height="6" fill="#ffb900"/>
</svg>
<svg class="a" style="left:815px;top:1040px" width="30" height="30" viewBox="0 0 30 30">
<circle cx="15" cy="15" r="14" fill="#dd4b39"/>
<path d="M15 15 L2.9 8 A14 14 0 0 0 8 27.1 Z" fill="#1da462"/>
<path d="M15 15 L8 27.1 A14 14 0 0 0 29 15 L27.1 8 Z" fill="#fcc934"/>
<path d="M15 15 L27.1 8 A14 14 0 0 0 2.9 8 Z" fill="#dd4b39"/>
<circle cx="15" cy="15" r="6.3" fill="#fff"/>
<circle cx="15" cy="15" r="5" fill="#4c8bf5"/>
</svg>
<svg class="a" style="left:877px;top:1040px" width="30" height="30" viewBox="0 0 30 30">
<rect x="0" y="0" width="30" height="30" rx="3" fill="#5fae1b"/>
<path d="M9 6 H25 L21 10.5 H12.5 V20 H21 L25 24.5 H9 L5.5 21 V9.5 Z" fill="#f4f4f4"/>
</svg>
<svg class="a" style="left:939px;top:1040px" width="30" height="30" viewBox="0 0 30 30">
<rect x="0" y="0" width="30" height="30" rx="3" fill="#ff5b3d"/>
<path d="M9 6 H25 L21 10.5 H12.5 V20 H21 L25 24.5 H9 L5.5 21 V9.5 Z" fill="#f4f4f4"/>
</svg>
<svg class="a" style="left:1000px;top:1040px" width="31" height="29" viewBox="0 0 31 29">
<rect x="7" y="0.5" width="23" height="28" rx="1" fill="#1d7244"/>
<rect x="7" y="0.5" width="23" height="9.5" fill="#2fb16e"/>
<rect x="18.5" y="10" width="11.5" height="9" fill="#21a366"/>
<rect x="0" y="6" width="14.5" height="15" fill="#107c41"/>
<path d="M4 9.5 L10.5 17.5 M10.5 9.5 L4 17.5" stroke="#fff" stroke-width="2"/>
</svg>
<div class="a" style="left:1048px;top:1030px;width:61px;height:50px;background:#474747"></div>
<svg class="a" style="left:1062px;top:1040px" width="31" height="29" viewBox="0 0 31 29">
<rect x="7" y="1" width="23" height="27" rx="1" fill="#1a5cc2"/>
<rect x="7" y="1" width="23" height="9" fill="#41a5ee"/>
<rect x="7" y="10" width="23" height="9" fill="#2b7cd3"/>
<rect x="0" y="6.5" width="15" height="15" fill="#185abd"/>
<path d="M2.5 10 L4.5 18 L7.5 12 L10.5 18 L12.5 10" fill="none" stroke="#fff" stroke-width="1.8" stroke-linejoin="round"/>
</svg>
<div class="a" style="left:681px;top:1077px;width:51px;height:3px;background:#76b9ed"></div>
<div class="a" style="left:805px;top:1077px;width:51px;height:3px;background:#76b9ed"></div>
<div class="a" style="left:867px;top:1077px;width:51px;height:3px;background:#76b9ed"></div>
<div class="a" style="left:929px;top:1077px;width:51px;height:3px;background:#76b9ed"></div>
<div class="a" style="left:991px;top:1077px;width:51px;height:3px;background:#76b9ed"></div>
<div class="a" style="left:1048px;top:1077px;width:61px;height:3px;background:#76b9ed"></div>
<!-- tray -->
<svg class="a" style="left:1495px;top:1045px" width="20" height="20" viewBox="0 0 20 20">
<circle cx="10" cy="10" r="9" fill="#fff"/>
<path d="M14.5 3.5 C10.5 2.5 6 4.5 5.5 8.5 C5 12 8 14 10.5 13 C13 12 13 8.5 10.5 7.5 C8.5 6.8 6.5 8.5 7.2 10.5" fill="none" stroke="#222" stroke-width="1.1"/>
<path d="M13.2 12 C12.5 15 9 17 4 15.5" fill="none" stroke="#222" stroke-width="1.1"/>
</svg>
<svg class="a" style="left:1537px;top:1047px" width="28" height="17" viewBox="0 0 28 17">
<path d="M0.8 0.8 H13 Q17.4 0.8 17.4 5 V15.8 H13 V5.5 Q13 4.6 12 4.6 H5.2 V15.8 H0.8 Z" fill="#fff"/>
<rect x="7" y="7.2" width="4" height="8.6" fill="#fff"/>
<rect x="22" y="0.8" width="4" height="15" fill="#fff"/>
</svg>
<svg class="a" style="left:1581px;top:1049px" width="19" height="12" viewBox="0 0 19 12"><path d="M1.5 10 L9.5 2 L17.5 10" fill="none" stroke="#fff" stroke-width="1.3"/></svg>
<svg class="a" style="left:1609px;top:1044px" width="22" height="22" viewBox="0 0 22 22">
<path d="M11 11 L11 1 L17 7 L11 11 Z" fill="#4285f4"/>
<path d="M11 11 L21 11 L15 17 Z" fill="#34a853"/>
<path d="M11 11 L11 21 L5 15 Z" fill="#fbbc04"/>
<path d="M11 11 L1 11 L7 5 Z" fill="#ea4335"/>
<path d="M11 11 L7 5 L11 1 Z" fill="#f6a53a"/>
<path d="M11 11 L17 7 L21 11 Z" fill="#3aa0f0"/>
<path d="M11 11 L15 17 L11 21 Z" fill="#8ac53f"/>
<path d="M11 11 L5 15 L1 11 Z" fill="#f8c92a"/>
</svg>
<svg class="a" style="left:1640px;top:1049px" width="22" height="14" viewBox="0 0 22 14">
<rect x="1.5" y="1.5" width="17" height="11" fill="none" stroke="#fff" stroke-width="1.3"/>
<rect x="3.5" y="3.5" width="8" height="7" fill="#fff"/>
<rect x="19" y="5" width="2" height="4" fill="#fff"/>
</svg>
<svg class="a" style="left:1671px;top:1044px" width="17" height="23" viewBox="0 0 17 23">
<rect x="4.5" y="1" width="8" height="14" rx="4" fill="#fff"/>
<path d="M2 10 A6.5 6.5 0 0 0 15 10 M8.5 17 V21 M5 21.5 H12" fill="none" stroke="#fff" stroke-width="1.3"/>
</svg>
<svg class="a" style="left:1702px;top:1047px" width="18" height="18" viewBox="0 0 18 18">
<path d="M2 9 A12 12 0 0 1 16 2 M5 12 A8 8 0 0 1 16 6.5 M8.5 14.5 A4 4 0 0 1 16 11" fill="none" stroke="#7a7a7a" stroke-width="1.2"/>
<circle cx="14.5" cy="15" r="1.6" fill="#fff"/>
</svg>
<svg class="a" style="left:1729px;top:1047px" width="22" height="18" viewBox="0 0 22 18">
<path d="M1.5 6 H5 L10 1.5 V16.5 L5 12 H1.5 Z" fill="none" stroke="#fff" stroke-width="1.2"/>
<path d="M13 6.5 A3 3 0 0 1 13 11.5 M15.5 4 A6 6 0 0 1 15.5 14 M18.5 2 A9 9 0 0 1 18.5 16" fill="none" stroke="#fff" stroke-width="1.1"/>
</svg>
<div class="a" style="left:1758px;top:1042px;font-size:20px;color:#fff;white-space:nowrap">中</div>
<div class="a" style="left:1798px;top:1036px;font-size:15.8px;color:#fff;white-space:nowrap">23:14</div>
<div class="a" style="left:1792px;top:1058px;font-size:15.7px;color:#fff;white-space:nowrap">20.5.10</div>
<svg class="a" style="left:1866px;top:1043px" width="36" height="34" viewBox="0 0 36 34">
<path d="M2.5 2.5 H22.5 V16.5 H10 L5.5 20.5 V16.5 H2.5 Z" fill="#fff"/>
<path d="M6 6.5 H19 M6 9.5 H19 M6 12.5 H15" stroke="#272627" stroke-width="1.2"/>
<circle cx="23" cy="21.5" r="9.5" fill="#272627" stroke="#aaa" stroke-width="1.1"/>
<text x="23" y="26.5" text-anchor="middle" font-family="Liberation Sans" font-size="14" font-weight="bold" fill="#fff">3</text>
</svg>
<div class="a" style="left:1914px;top:1030px;width:1px;height:50px;background:#6a6a6a"></div>


<!--MAGNIFIER-->
<svg class="a" style="left:520px;top:145px" width="220" height="220" viewBox="520 145 220 220">
<defs><clipPath id="cc"><circle cx="629.5" cy="254.3" r="98.5"/></clipPath>
<filter id="bl" x="-10%" y="-10%" width="120%" height="120%"><feGaussianBlur stdDeviation="0.8"/></filter></defs>
<g clip-path="url(#cc)">
<g transform="translate(628.2 255.8) scale(1.5) translate(-628.2 -255.8)"><rect x="400" y="100" width="500" height="97" fill="#f3f3f3"/><rect x="400" y="197" width="500" height="1" fill="#d8d8d8"/><rect x="400" y="198" width="500" height="76" fill="#e3e3e3"/><rect x="400" y="203" width="500" height="20" fill="#fefefe"/><text x="537.0" y="218" text-anchor="middle" font-family="Liberation Sans" font-size="11" fill="#3a3a3a" stroke="#3a3a3a" stroke-width="0.3">10</text><text x="571.4" y="218" text-anchor="middle" font-family="Liberation Sans" font-size="11" fill="#3a3a3a" stroke="#3a3a3a" stroke-width="0.3">11</text><text x="605.8" y="218" text-anchor="middle" font-family="Liberation Sans" font-size="11" fill="#3a3a3a" stroke="#3a3a3a" stroke-width="0.3">12</text><text x="640.2" y="218" text-anchor="middle" font-family="Liberation Sans" font-size="11" fill="#3a3a3a" stroke="#3a3a3a" stroke-width="0.3">13</text><text x="674.6" y="218" text-anchor="middle" font-family="Liberation Sans" font-size="11" fill="#3a3a3a" stroke="#3a3a3a" stroke-width="0.3">14</text><text x="709.0" y="218" text-anchor="middle" font-family="Liberation Sans" font-size="11" fill="#3a3a3a" stroke="#3a3a3a" stroke-width="0.3">15</text><text x="743.4" y="218" text-anchor="middle" font-family="Liberation Sans" font-size="11" fill="#3a3a3a" stroke="#3a3a3a" stroke-width="0.3">16</text><rect x="519" y="210" width="1" height="8" fill="#3a3a3a"/><rect x="554" y="210" width="1" height="8" fill="#3a3a3a"/><rect x="588" y="210" width="1" height="8" fill="#3a3a3a"/><rect x="622" y="210" width="1" height="8" fill="#3a3a3a"/><rect x="657" y="210" width="1" height="8" fill="#3a3a3a"/><rect x="691" y="210" width="1" height="8" fill="#3a3a3a"/><rect x="726" y="210" width="1" height="8" fill="#3a3a3a"/><rect x="760" y="210" width="1" height="8" fill="#3a3a3a"/><rect x="400" y="274" width="500" height="1" fill="#c8c8c8"/><rect x="400" y="275" width="500" height="100" fill="#fefefe"/></g>
<path d="M629.5 254.5 V270.5 L633.5 266.8 L636.8 272.3 L638.8 271.3 L636 265.8 H640.8 Z" fill="#fff" stroke="#000" stroke-width="1" stroke-linejoin="round"/>
<circle cx="643.5" cy="254.4" r="5.85" fill="none" stroke="#1e8be6" stroke-width="3.5"/>
<path d="M638.6 251.2 A5.85 5.85 0 0 0 638.3 257.4" fill="none" stroke="#22c4f4" stroke-width="3.5"/>
</g>
<circle cx="629.5" cy="254.3" r="98.6" fill="none" stroke="#000" stroke-opacity="0.55" stroke-width="4" filter="url(#bl)"/>
<circle cx="629.5" cy="254.3" r="98.6" fill="none" stroke="#111" stroke-width="2.4"/>
</svg>
</body></html>
